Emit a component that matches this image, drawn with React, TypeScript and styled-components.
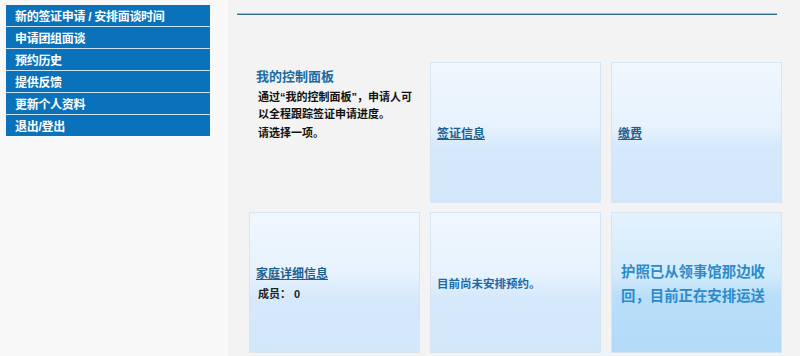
import styled, { createGlobalStyle } from 'styled-components';

const GlobalStyle = createGlobalStyle`
  html, body {
    margin: 0;
    padding: 0;
    background: #f4f4f4;
    font-family: 'Liberation Sans', 'Noto Sans CJK SC', sans-serif;
  }
`;

const Page = styled.div`
  display: flex;
  align-items: flex-start;
  width: 800px;
  height: 356px;
  overflow: hidden;
  background: linear-gradient(to right, #f8f8f8 0, #f8f8f8 228px, #f3f3f3 228px);
`;

const Sidebar = styled.ul`
  list-style: none;
  margin: 5px 0 0 6px;
  padding: 0;
  width: 204px;
  display: flex;
  flex-direction: column;
  gap: 1px;
  background: #cde3f2;
`;

const NavItem = styled.li`
  height: 21px;
  display: flex;
  align-items: center;
  padding-left: 9px;
  background: #0a72ba;
  color: #ffffff;
  font-size: 12px;
  font-weight: 700;
  letter-spacing: -0.3px;
  white-space: nowrap;
`;

const Main = styled.div`
  margin-left: 27px;
  padding-top: 13px;
  width: 546px;
  display: flex;
  flex-direction: column;
`;

const Rule = styled.div`
  width: 540px;
  height: 2px;
  background: #2f6f8c;
  border-top: 1px solid #8fc3de;
  box-sizing: border-box;
`;

const Grid = styled.div`
  margin: 47px 0 0 12px;
  display: grid;
  grid-template-columns: repeat(3, 171px);
  grid-template-rows: repeat(2, 141px);
  column-gap: 10px;
  row-gap: 9px;
`;

const Tile = styled.div<{ $tone?: 'plain' | 'light' | 'strong' }>`
  box-sizing: border-box;
  display: flex;
  flex-direction: column;
  justify-content: ${(p) => (p.$tone === 'plain' ? 'flex-start' : 'center')};
  padding: ${(p) => (p.$tone === 'plain' ? '0 6px' : p.$tone === 'strong' ? '0 6px 0 9px' : '0 6px')};
  border: 1px solid ${(p) => (p.$tone === 'plain' ? 'transparent' : '#d6e5f3')};
  background: ${(p) =>
    p.$tone === 'plain'
      ? 'transparent'
      : p.$tone === 'strong'
        ? 'linear-gradient(to bottom, #e4f2fd 0%, #d2eafb 45%, #b9def8 60%, #b2dbf8 100%)'
        : 'linear-gradient(to bottom, #eff7fe 0%, #e7f2fd 45%, #d6e9fb 60%, #d3e7fb 100%)'};
`;

const PanelTitle = styled.div`
  color: #1c6aa0;
  font-size: 13px;
  font-weight: 700;
  margin: 3px 0 4px;
`;

const Body = styled.p`
  margin: 0 0 2px 2px;
  color: #111;
  font-size: 11px;
  font-weight: 700;
  line-height: 17px;
`;

const TileLink = styled.a`
  color: #1d5f90;
  font-size: 12px;
  font-weight: 700;
  text-decoration: underline;
  cursor: pointer;
`;

const Members = styled.div`
  margin: 3px 0 0 2px;
  color: #222;
  font-size: 11px;
  font-weight: 700;
`;

const Notice = styled.div`
  color: #1d6aa6;
  font-size: 11.5px;
  font-weight: 700;
`;

const Status = styled.div`
  max-width: 146px;
  color: #2b8bcb;
  font-size: 14.4px;
  font-weight: 700;
  line-height: 24px;
  margin-top: 2px;
`;

const navItems = [
  '新的签证申请 / 安排面谈时间',
  '申请团组面谈',
  '预约历史',
  '提供反馈',
  '更新个人资料',
  '退出/登出',
];

export default function App() {
  return (
    <>
      <GlobalStyle />
      <Page>
        <Sidebar>
          {navItems.map((item) => (
            <NavItem key={item}>{item}</NavItem>
          ))}
        </Sidebar>
        <Main>
          <Rule />
          <Grid>
            <Tile $tone="plain">
              <PanelTitle>我的控制面板</PanelTitle>
              <Body>通过“我的控制面板”，申请人可以全程跟踪签证申请进度。</Body>
              <Body>请选择一项。</Body>
            </Tile>
            <Tile $tone="light">
              <div>
                <TileLink>签证信息</TileLink>
              </div>
            </Tile>
            <Tile $tone="light">
              <div>
                <TileLink>缴费</TileLink>
              </div>
            </Tile>
            <Tile $tone="light">
              <div>
                <TileLink>家庭详细信息</TileLink>
              </div>
              <Members>成员： 0</Members>
            </Tile>
            <Tile $tone="light">
              <Notice>目前尚未安排预约。</Notice>
            </Tile>
            <Tile $tone="strong">
              <Status>护照已从领事馆那边收回，目前正在安排运送</Status>
            </Tile>
          </Grid>
        </Main>
      </Page>
    </>
  );
}
